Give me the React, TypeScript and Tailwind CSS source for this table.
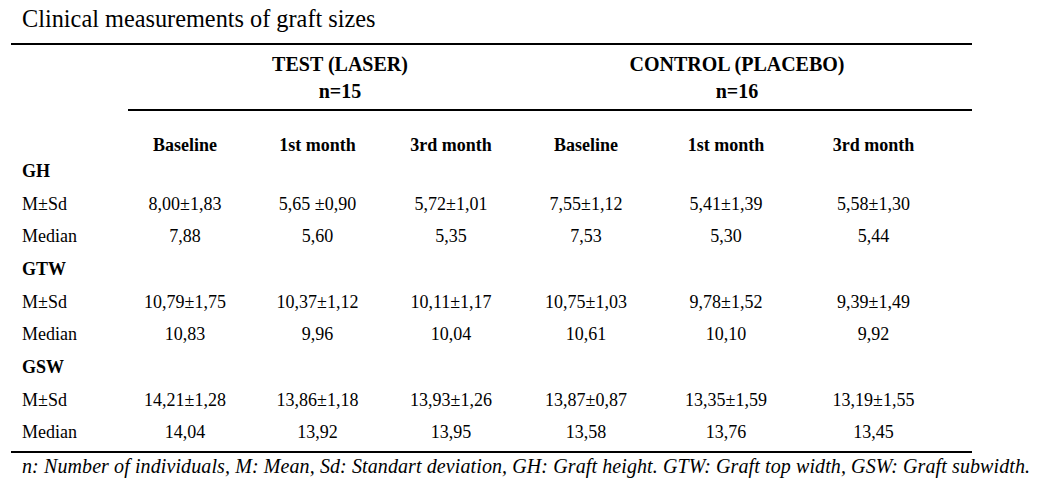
const groups = [
  {
    name: "GH",
    rows: [
      { label: "M±Sd", values: ["8,00±1,83", "5,65 ±0,90", "5,72±1,01", "7,55±1,12", "5,41±1,39", "5,58±1,30"] },
      { label: "Median", values: ["7,88", "5,60", "5,35", "7,53", "5,30", "5,44"] },
    ],
  },
  {
    name: "GTW",
    rows: [
      { label: "M±Sd", values: ["10,79±1,75", "10,37±1,12", "10,11±1,17", "10,75±1,03", "9,78±1,52", "9,39±1,49"] },
      { label: "Median", values: ["10,83", "9,96", "10,04", "10,61", "10,10", "9,92"] },
    ],
  },
  {
    name: "GSW",
    rows: [
      { label: "M±Sd", values: ["14,21±1,28", "13,86±1,18", "13,93±1,26", "13,87±0,87", "13,35±1,59", "13,19±1,55"] },
      { label: "Median", values: ["14,04", "13,92", "13,95", "13,58", "13,76", "13,45"] },
    ],
  },
];

const columns = ["Baseline", "1st month", "3rd month", "Baseline", "1st month", "3rd month"];

// one entry per group: [group name row, M±Sd row, Median row]
const rowHeights = [
  ["h-[33px] leading-[33px]", "h-[32px] leading-[32px]", "h-[33px] leading-[33px]"],
  ["h-[33px] leading-[33px]", "h-[32px] leading-[32px]", "h-[32px] leading-[32px]"],
  ["h-[34px] leading-[34px]", "h-[32px] leading-[32px]", "h-[33px] leading-[33px]"],
];
const gridCols = "grid grid-cols-[108px_132px_133px_134px_136px_144px_151px_1fr]";

function DataRow({ label, values, bold, height }: { label: string; values?: string[]; bold?: boolean; height: string }) {
  return (
    <div className={`${gridCols} ${height}`}>
      <div className={`pl-[11px] ${bold ? "font-bold" : ""}`}>{label}</div>
      {(values ?? ["", "", "", "", "", ""]).map((v, i) => (
        <div key={i} className="whitespace-nowrap text-center">
          {v}
        </div>
      ))}
      <div />
    </div>
  );
}

export default function App() {
  return (
    <div className="h-[488px] w-[1044px] overflow-hidden bg-white font-['Liberation_Serif',serif] text-[18px] text-black">
      <div className="pl-[22px] pt-[5px] text-[24.3px] leading-[28px]">Clinical measurements of graft sizes</div>

      <div className="ml-[11px] w-[961px]">
        <div className="mt-[10px] h-[2px] bg-black" />

        <div className="mt-[7px] flex text-[20px] font-bold">
          <div className="w-[117px]" />
          <div className="w-[424px] text-center">
            <div className="leading-[24px]">TEST (LASER)</div>
            <div className="mt-[3px] leading-[24px]">n=15</div>
          </div>
          <div className="w-[370px] text-center">
            <div className="leading-[24px]">CONTROL (PLACEBO)</div>
            <div className="mt-[3px] leading-[24px]">n=16</div>
          </div>
        </div>

        <div className="ml-[117px] mt-[6px] h-[2px] bg-black" />

        <div className={`${gridCols} mt-[25px] h-[19px] font-bold leading-[19px]`}>
          <div />
          {columns.map((c, i) => (
            <div key={i} className="whitespace-nowrap text-center">
              {c}
            </div>
          ))}
          <div />
        </div>

        {groups.map((g, gi) => (
          <div key={g.name}>
            <DataRow label={g.name} bold height={rowHeights[gi][0]} />
            {g.rows.map((r, ri) => (
              <DataRow key={r.label} label={r.label} values={r.values} height={rowHeights[gi][ri + 1]} />
            ))}
          </div>
        ))}

        <div className="mt-[2px] h-[2px] bg-black" />
      </div>

      <div className="whitespace-nowrap pl-[22px] pt-[1px] text-[20px] italic leading-[24px] tracking-[0.1px]">
        n: Number of individuals, M: Mean, Sd: Standart deviation, GH: Graft height. GTW: Graft top width, GSW: Graft subwidth.
      </div>
    </div>
  );
}
